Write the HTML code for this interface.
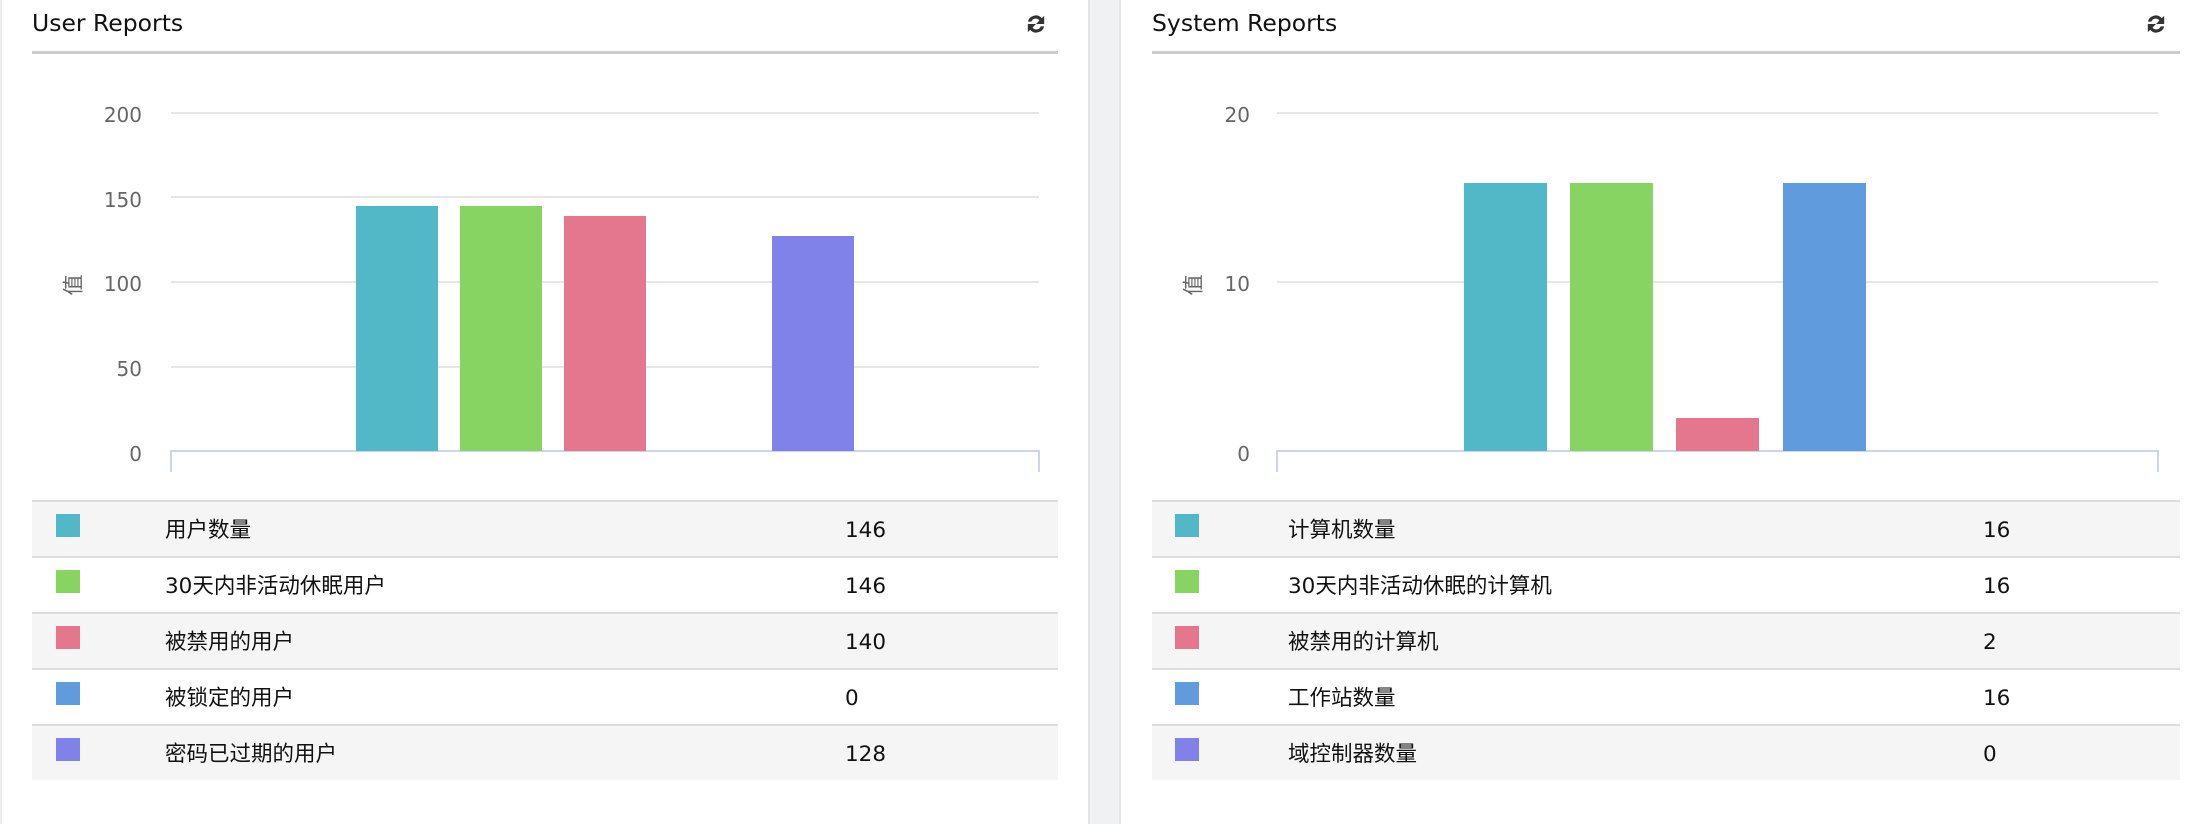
<!DOCTYPE html><html><head><meta charset="utf-8"><style>
body{margin:0;width:2212px;height:824px;background:#fff;position:relative;overflow:hidden;font-family:"DejaVu Sans","Noto Sans CJK SC",sans-serif;}
.a{position:absolute}
.gap{left:1088px;top:0;width:33px;height:824px;background:#f0f1f3;border-left:2px solid #e4e4e4;border-right:2px solid #e4e4e4;box-sizing:border-box}
.title{font-size:23.5px;color:#111;top:9px}
.hl{height:3px;background:#ccc;top:51px}
.g{height:2px;background:#e6e6e6}
.yl{font-size:20px;color:#666;text-align:right;width:60px}
.row{height:54px;border-top:2px solid #ddd;font-size:21.5px;color:#111}
.row.o{background:#f5f5f5}
.row span{position:absolute;top:14px;line-height:30px}
.sw{position:absolute;top:12px;width:24px;height:23px}
</style></head><body>
<div class="a" style="left:0;top:0;width:2px;height:824px;background:#eee"></div>
<div class="a gap"></div>
<div class="a title" style="left:32px">User Reports</div>
<svg class="a" style="left:1022px;top:10px" width="28" height="28" viewBox="0 0 24 24"><path d="M5 10a7 7 0 0 1 12-3l2-2v7h-7l3-3a4 4 0 0 0-7 1z M19 14a7 7 0 0 1-12 3l-2 2v-7h7l-3 3a4 4 0 0 0 7-1z" fill="#333"/></svg>
<div class="a hl" style="left:32px;width:1026px"></div>
<div class="a g" style="left:171px;width:868px;top:112px"></div>
<div class="a g" style="left:171px;width:868px;top:196px"></div>
<div class="a g" style="left:171px;width:868px;top:281px"></div>
<div class="a g" style="left:171px;width:868px;top:366px"></div>
<div class="a" style="left:171px;width:868px;top:450px;height:2px;background:#ccd6eb"></div>
<div class="a" style="left:170px;top:450px;width:2px;height:22px;background:#ccd6eb"></div>
<div class="a" style="left:1038px;top:450px;width:2px;height:22px;background:#ccd6eb"></div>
<div class="a yl" style="left:82px;top:103px">200</div>
<div class="a yl" style="left:82px;top:188px">150</div>
<div class="a yl" style="left:82px;top:272px">100</div>
<div class="a yl" style="left:82px;top:357px">50</div>
<div class="a yl" style="left:82px;top:442px">0</div>
<div class="a" style="left:62px;top:270px;font-size:21px;color:#666;transform:rotate(-90deg)">值</div>
<div class="a" style="left:356px;top:206px;width:82px;height:245px;background:#52b7c6"></div>
<div class="a" style="left:460px;top:206px;width:82px;height:245px;background:#87d463"></div>
<div class="a" style="left:564px;top:216px;width:82px;height:235px;background:#e4778d"></div>
<div class="a" style="left:772px;top:236px;width:82px;height:215px;background:#8082e9"></div>
<div class="a row o" style="left:32px;width:1026px;top:500px"><div class="sw" style="left:24px;background:#52b7c6"></div><span style="left:133px">用户数量</span><span style="left:813px">146</span></div>
<div class="a row" style="left:32px;width:1026px;top:556px"><div class="sw" style="left:24px;background:#87d463"></div><span style="left:133px">30天内非活动休眠用户</span><span style="left:813px">146</span></div>
<div class="a row o" style="left:32px;width:1026px;top:612px"><div class="sw" style="left:24px;background:#e4778d"></div><span style="left:133px">被禁用的用户</span><span style="left:813px">140</span></div>
<div class="a row" style="left:32px;width:1026px;top:668px"><div class="sw" style="left:24px;background:#5f9bdd"></div><span style="left:133px">被锁定的用户</span><span style="left:813px">0</span></div>
<div class="a row o" style="left:32px;width:1026px;top:724px"><div class="sw" style="left:24px;background:#8082e9"></div><span style="left:133px">密码已过期的用户</span><span style="left:813px">128</span></div>
<div class="a title" style="left:1152px">System Reports</div>
<svg class="a" style="left:2142px;top:10px" width="28" height="28" viewBox="0 0 24 24"><path d="M5 10a7 7 0 0 1 12-3l2-2v7h-7l3-3a4 4 0 0 0-7 1z M19 14a7 7 0 0 1-12 3l-2 2v-7h7l-3 3a4 4 0 0 0 7-1z" fill="#333"/></svg>
<div class="a hl" style="left:1152px;width:1028px"></div>
<div class="a g" style="left:1277px;width:881px;top:112px"></div>
<div class="a g" style="left:1277px;width:881px;top:281px"></div>
<div class="a" style="left:1277px;width:881px;top:450px;height:2px;background:#ccd6eb"></div>
<div class="a" style="left:1276px;top:450px;width:2px;height:22px;background:#ccd6eb"></div>
<div class="a" style="left:2157px;top:450px;width:2px;height:22px;background:#ccd6eb"></div>
<div class="a yl" style="left:1190px;top:103px">20</div>
<div class="a yl" style="left:1190px;top:272px">10</div>
<div class="a yl" style="left:1190px;top:442px">0</div>
<div class="a" style="left:1182px;top:270px;font-size:21px;color:#666;transform:rotate(-90deg)">值</div>
<div class="a" style="left:1464px;top:183px;width:83px;height:268px;background:#52b7c6"></div>
<div class="a" style="left:1570px;top:183px;width:83px;height:268px;background:#87d463"></div>
<div class="a" style="left:1676px;top:418px;width:83px;height:33px;background:#e4778d"></div>
<div class="a" style="left:1783px;top:183px;width:83px;height:268px;background:#5f9bdd"></div>
<div class="a row o" style="left:1152px;width:1028px;top:500px"><div class="sw" style="left:23px;background:#52b7c6"></div><span style="left:136px">计算机数量</span><span style="left:831px">16</span></div>
<div class="a row" style="left:1152px;width:1028px;top:556px"><div class="sw" style="left:23px;background:#87d463"></div><span style="left:136px">30天内非活动休眠的计算机</span><span style="left:831px">16</span></div>
<div class="a row o" style="left:1152px;width:1028px;top:612px"><div class="sw" style="left:23px;background:#e4778d"></div><span style="left:136px">被禁用的计算机</span><span style="left:831px">2</span></div>
<div class="a row" style="left:1152px;width:1028px;top:668px"><div class="sw" style="left:23px;background:#5f9bdd"></div><span style="left:136px">工作站数量</span><span style="left:831px">16</span></div>
<div class="a row o" style="left:1152px;width:1028px;top:724px"><div class="sw" style="left:23px;background:#8082e9"></div><span style="left:136px">域控制器数量</span><span style="left:831px">0</span></div>
</body></html>
